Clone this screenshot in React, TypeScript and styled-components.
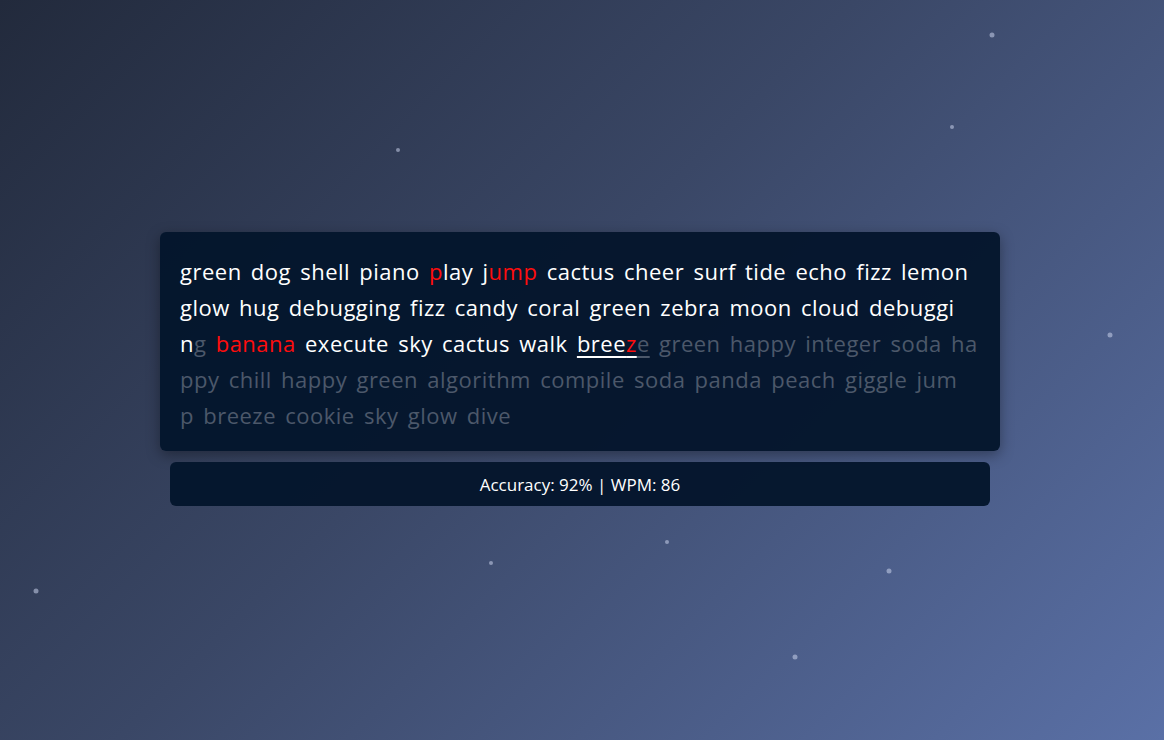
import React from "react";
import styled, { createGlobalStyle } from "styled-components";

type CharState = "correct" | "wrong" | "pending";

type Token = { text: string; state: CharState; cursor?: boolean };

const GlobalStyle = createGlobalStyle`
  html, body {
    margin: 0;
    padding: 0;
    height: 100%;
  }
  body {
    font-family: "Open Sans", "Noto Sans", sans-serif;
    overflow: hidden;
  }
`;

const Page = styled.div`
  position: relative;
  width: 1164px;
  height: 740px;
  background: linear-gradient(135deg, #222a3c 0%, #3a4766 45%, #5a70a6 100%);
  display: flex;
  flex-direction: column;
  align-items: center;
  justify-content: center;
  overflow: hidden;
`;

const Star = styled.span<{ $size: number }>`
  position: absolute;
  width: ${(p) => p.$size}px;
  height: ${(p) => p.$size}px;
  border-radius: 50%;
  background: rgba(200, 210, 235, 0.55);
  filter: blur(0.6px);
  transform: translate(-50%, -50%);
`;

const Stack = styled.div`
  position: relative;
  display: flex;
  flex-direction: column;
  align-items: center;
  gap: 11px;
  margin-top: -2px;
  margin-right: 4px;
`;

const TextBox = styled.div`
  width: 840px;
  box-sizing: border-box;
  padding: 21px 20px 18px;
  background: rgba(4, 22, 44, 0.97);
  border-radius: 6px;
  box-shadow: 0 4px 14px rgba(0, 0, 0, 0.35);
`;

const Line = styled.div`
  height: 36px;
  line-height: 36px;
  font-size: 22px;
  white-space: pre;
  letter-spacing: 0.5px;
  word-spacing: 3px;
`;

const Char = styled.span<{ $state: CharState; $cursor?: boolean }>`
  color: ${(p) =>
    p.$state === "correct" ? "#ffffff" : p.$state === "wrong" ? "#ff0d0d" : "#4c586a"};
  text-decoration: ${(p) => (p.$cursor ? "underline" : "none")};
  text-decoration-color: ${(p) => (p.$state === "pending" ? "#4c586a" : "#ffffff")};
  text-underline-offset: 4px;
  text-decoration-thickness: 2px;
`;

const StatsBar = styled.div`
  width: 820px;
  height: 44px;
  background: rgba(4, 22, 44, 0.97);
  border-radius: 6px;
  display: flex;
  align-items: center;
  justify-content: center;
  color: #ffffff;
  font-size: 17px;
`;

const c = (text: string): Token => ({ text, state: "correct" });
const w = (text: string): Token => ({ text, state: "wrong" });
const p = (text: string): Token => ({ text, state: "pending" });
const cur = (t: Token): Token => ({ ...t, cursor: true });

const lines: Token[][] = [
  [c("green dog shell piano "), w("p"), c("lay j"), w("ump"), c(" cactus cheer surf tide echo fizz lemon")],
  [c("glow hug debugging fizz candy coral green zebra moon cloud debuggi")],
  [
    c("n"),
    p("g "),
    w("banana"),
    c(" execute sky cactus walk "),
    cur(c("bree")),
    cur(w("z")),
    cur(p("e")),
    p(" green happy integer soda ha"),
  ],
  [p("ppy chill happy green algorithm compile soda panda peach giggle jum")],
  [p("p breeze cookie sky glow dive")],
];

const stars: { x: number; y: number; s: number }[] = [
  { x: 992, y: 35, s: 5 },
  { x: 952, y: 127, s: 4 },
  { x: 398, y: 150, s: 4 },
  { x: 1110, y: 335, s: 5 },
  { x: 36, y: 591, s: 5 },
  { x: 491, y: 563, s: 4 },
  { x: 667, y: 542, s: 4 },
  { x: 889, y: 571, s: 5 },
  { x: 795, y: 657, s: 5 },
];

export default function App() {
  return (
    <>
      <GlobalStyle />
      <Page>
        {stars.map((s, i) => (
          <Star key={i} $size={s.s} style={{ left: s.x, top: s.y }} />
        ))}
        <Stack>
          <TextBox>
            {lines.map((line, i) => (
              <Line key={i}>
                {line.map((t, j) => (
                  <Char key={j} $state={t.state} $cursor={t.cursor}>
                    {t.text}
                  </Char>
                ))}
              </Line>
            ))}
          </TextBox>
          <StatsBar>Accuracy: 92% | WPM: 86</StatsBar>
        </Stack>
      </Page>
    </>
  );
}
